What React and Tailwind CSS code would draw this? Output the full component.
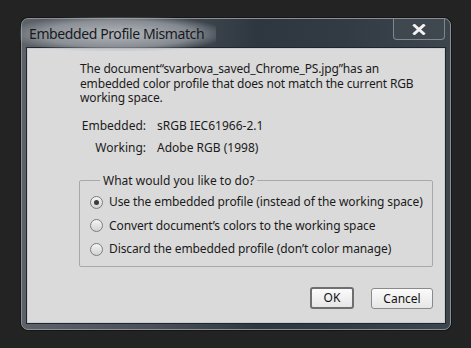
import React from "react";

function Radio({ checked, label }) {
  return (
    <div className="flex items-center h-[23.5px]">
      <span className="w-[13px] h-[13px] rounded-full border border-[#7c7c7c] bg-gradient-to-b from-[#f4f4f4] to-[#d2d2d2] flex items-center justify-center shrink-0">
        {checked && <span className="w-[5px] h-[5px] rounded-full bg-[#3a3a3a]" />}
      </span>
      <span className="ml-[6px] whitespace-nowrap tracking-[-0.1px]">{label}</span>
    </div>
  );
}

export default function App() {
  const font = { fontFamily: '"Noto Sans", "Open Sans", sans-serif' };

  return (
    <div className="w-[471px] h-[348px] bg-[#232323] pt-[18px] pl-[21px] overflow-hidden" style={font}>
      {/* Window frame */}
      <div className="w-[430px] h-[312px] rounded-[7px] border border-[#8b9098] bg-[linear-gradient(90deg,#5d6269_0%,#4a5058_30%,#2e3740_55%,#323b44_75%,#3d454d_100%)] flex flex-col shadow-[0_0_0_1px_#151515]">
        {/* Title bar */}
        <div className="h-[29px] flex items-start relative">
          <div className="absolute left-[-2px] top-[-2px] w-[196px] h-[34px] rounded-[12px] bg-[radial-gradient(ellipse_at_center,rgba(205,208,212,0.8)_0%,rgba(175,179,184,0.6)_55%,rgba(120,125,130,0)_80%)]" />
          <span className="relative ml-[7px] mt-[6px] text-[14px] leading-[18px] tracking-[-0.4px] text-[#161a1e]">
            Embedded Profile Mismatch
          </span>
          <div className="ml-auto mr-[5px] w-[52px] h-[21px] border border-t-0 border-[#7f868e] rounded-b-[4px] bg-[#3f474f] flex items-center justify-center relative">
            <svg width="14" height="11" viewBox="0 0 14 11">
              <path d="M2.5 1.5 L11.5 9.5 M11.5 1.5 L2.5 9.5" stroke="#f2f2f2" strokeWidth="3" strokeLinecap="square" />
            </svg>
          </div>
        </div>

        {/* Client area */}
        <div className="mx-[5px] h-[275px] bg-[#dadada] border border-[#c6ccd2] shadow-[0_0_0_1px_#1f262d] text-[12px] text-[#1b1b1b] flex flex-col">
          <p className="ml-[52px] mt-[13px] leading-[14.5px] whitespace-nowrap tracking-[-0.15px]">
            The document“svarbova_saved_Chrome_PS.jpg”has an
            <br />
            embedded color profile that does not match the current RGB
            <br />
            working space.
          </p>

          <div className="mt-[13px] ml-[53px] grid grid-cols-[65px_auto] gap-x-[11px] gap-y-[8px] leading-[14px]">
            <span className="text-right">Embedded:</span>
            <span>sRGB IEC61966-2.1</span>
            <span className="text-right">Working:</span>
            <span>Adobe RGB (1998)</span>
          </div>

          <fieldset className="mt-[19px] ml-[51px] w-[354px] h-[93px] border border-[#a9a9a9] rounded-[2px] pl-[10px] pt-[3px] m-0">
            <legend className="ml-[10px] px-[3px] leading-[14px]">What would you like to do?</legend>
            <Radio checked label="Use the embedded profile (instead of the working space)" />
            <Radio label="Convert document’s colors to the working space" />
            <Radio label="Discard the embedded profile (don’t color manage)" />
          </fieldset>

          <div className="mt-auto mb-[13px] flex justify-end mr-[11px] gap-[17px] items-center">
            <button className="w-[44px] h-[22px] rounded-[3px] border-2 border-[#6f6f6f] bg-gradient-to-b from-[#fbfbfb] to-[#e6e6e6] leading-[16px] text-[12px] text-[#111]">
              OK
            </button>
            <button className="w-[62px] h-[21px] rounded-[3px] border border-[#8a8a8a] bg-gradient-to-b from-[#fbfbfb] to-[#e6e6e6] leading-[17px] text-[12px] text-[#111]">
              Cancel
            </button>
          </div>
        </div>
      </div>
    </div>
  );
}
